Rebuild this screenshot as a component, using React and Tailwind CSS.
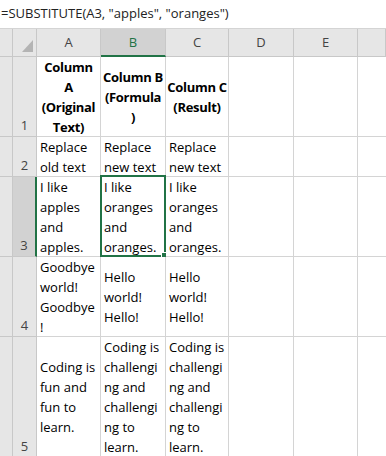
import React from "react";

const font = { fontFamily: "'Open Sans', sans-serif" };

const rows = [
  {
    n: "1",
    cells: [
      { lines: ["Column", "A", "(Original", "Text)"], bold: true },
      { lines: ["Column B", "(Formula", ")"], bold: true },
      { lines: ["Column C", "(Result)"], bold: true },
    ],
  },
  {
    n: "2",
    cells: [
      { lines: ["Replace", "old text"] },
      { lines: ["Replace", "new text"] },
      { lines: ["Replace", "new text"] },
    ],
  },
  {
    n: "3",
    sel: true,
    cells: [
      { lines: ["I like", "apples", "and", "apples."] },
      { lines: ["I like", "oranges", "and", "oranges."] },
      { lines: ["I like", "oranges", "and", "oranges."] },
    ],
  },
  {
    n: "4",
    cells: [
      { lines: ["Goodbye", "world!", "Goodbye", "!"] },
      { lines: ["Hello", "world!", "Hello!"] },
      { lines: ["Hello", "world!", "Hello!"] },
    ],
  },
  {
    n: "5",
    cells: [
      { lines: ["Coding is", "fun and", "fun to", "learn."] },
      { lines: ["Coding is", "challengi", "ng and", "challengi", "ng to", "learn."] },
      { lines: ["Coding is", "challengi", "ng and", "challengi", "ng to", "learn."] },
    ],
  },
];

function Cell({ c, selected }) {
  return (
    <div
      className={`relative flex min-h-0 flex-col justify-center border-r border-b border-[#d4d4d4] bg-white text-[13px] leading-[20px] text-black ${
        c.bold ? "items-center font-bold tracking-[-0.3px]" : "pl-[3px]"
      }`}
    >
      {c.lines.map((l, i) => (
        <div key={i} className="whitespace-nowrap">
          {l}
        </div>
      ))}
      {selected && (
        <div className="absolute -top-[2px] -left-[1px] -right-[1px] -bottom-[1px] border-2 border-[#217346]">
          <div className="absolute -right-[4px] -bottom-[4px] box-content h-[5px] w-[5px] border border-white bg-[#217346]" />
        </div>
      )}
    </div>
  );
}

export default function App() {
  return (
    <div className="h-[456px] w-[386px] overflow-hidden bg-white" style={font}>
      <div className="flex h-[29px] items-center border-b border-[#d4d4d4] pl-[1px] text-[13px] text-[#222]">
        =SUBSTITUTE(A3, "apples", "oranges")
      </div>
      <div className="grid grid-cols-[13px_24px_64px_65px_63px_65px_64px_1fr] grid-rows-[28px_80px_40px_80px_80px_121px]">
        <div className="border-r border-b border-[#c8c8c8] bg-[#e6e6e6]" />
        <div className="relative border-r border-b border-[#c8c8c8] bg-[#e6e6e6]">
          <svg className="absolute left-[9px] top-[11px]" width="11" height="12" viewBox="0 0 11 12">
            <polygon points="11,0 11,12 0,12" fill="#b4b4b4" />
          </svg>
        </div>
        {["A", "B", "C", "D", "E", ""].map((l) =>
          l === "B" ? (
            <div
              key={l}
              className="flex items-center justify-center border-r border-b-2 border-r-[#c8c8c8] border-b-[#217346] bg-[#d2d2d2] pt-[2px] text-[13px] text-[#217346]"
            >
              {l}
            </div>
          ) : (
            <div
              key={l || "F"}
              className="flex items-center justify-center border-r border-b border-[#c8c8c8] bg-[#e6e6e6] pt-[1px] text-[13px] text-[#444]"
            >
              {l}
            </div>
          )
        )}
        {rows.map((r) => (
          <React.Fragment key={r.n}>
            <div className="border-r border-b border-[#c8c8c8] bg-[#e6e6e6]" />
            <div
              className={`flex items-end justify-center border-b pb-[1px] text-[13px] leading-[20px] text-[#444] ${
                r.sel
                  ? "border-r-2 border-r-[#217346] border-b-[#c8c8c8] bg-[#d2d2d2]"
                  : "border-r border-[#c8c8c8] bg-[#e6e6e6]"
              }`}
            >
              {r.n}
            </div>
            <Cell c={r.cells[0]} />
            <Cell c={r.cells[1]} selected={r.sel} />
            <Cell c={r.cells[2]} />
            <div className="border-r border-b border-[#d4d4d4] bg-white" />
            <div className="border-r border-b border-[#d4d4d4] bg-white" />
            <div className="border-b border-[#d4d4d4] bg-white" />
          </React.Fragment>
        ))}
      </div>
    </div>
  );
}
